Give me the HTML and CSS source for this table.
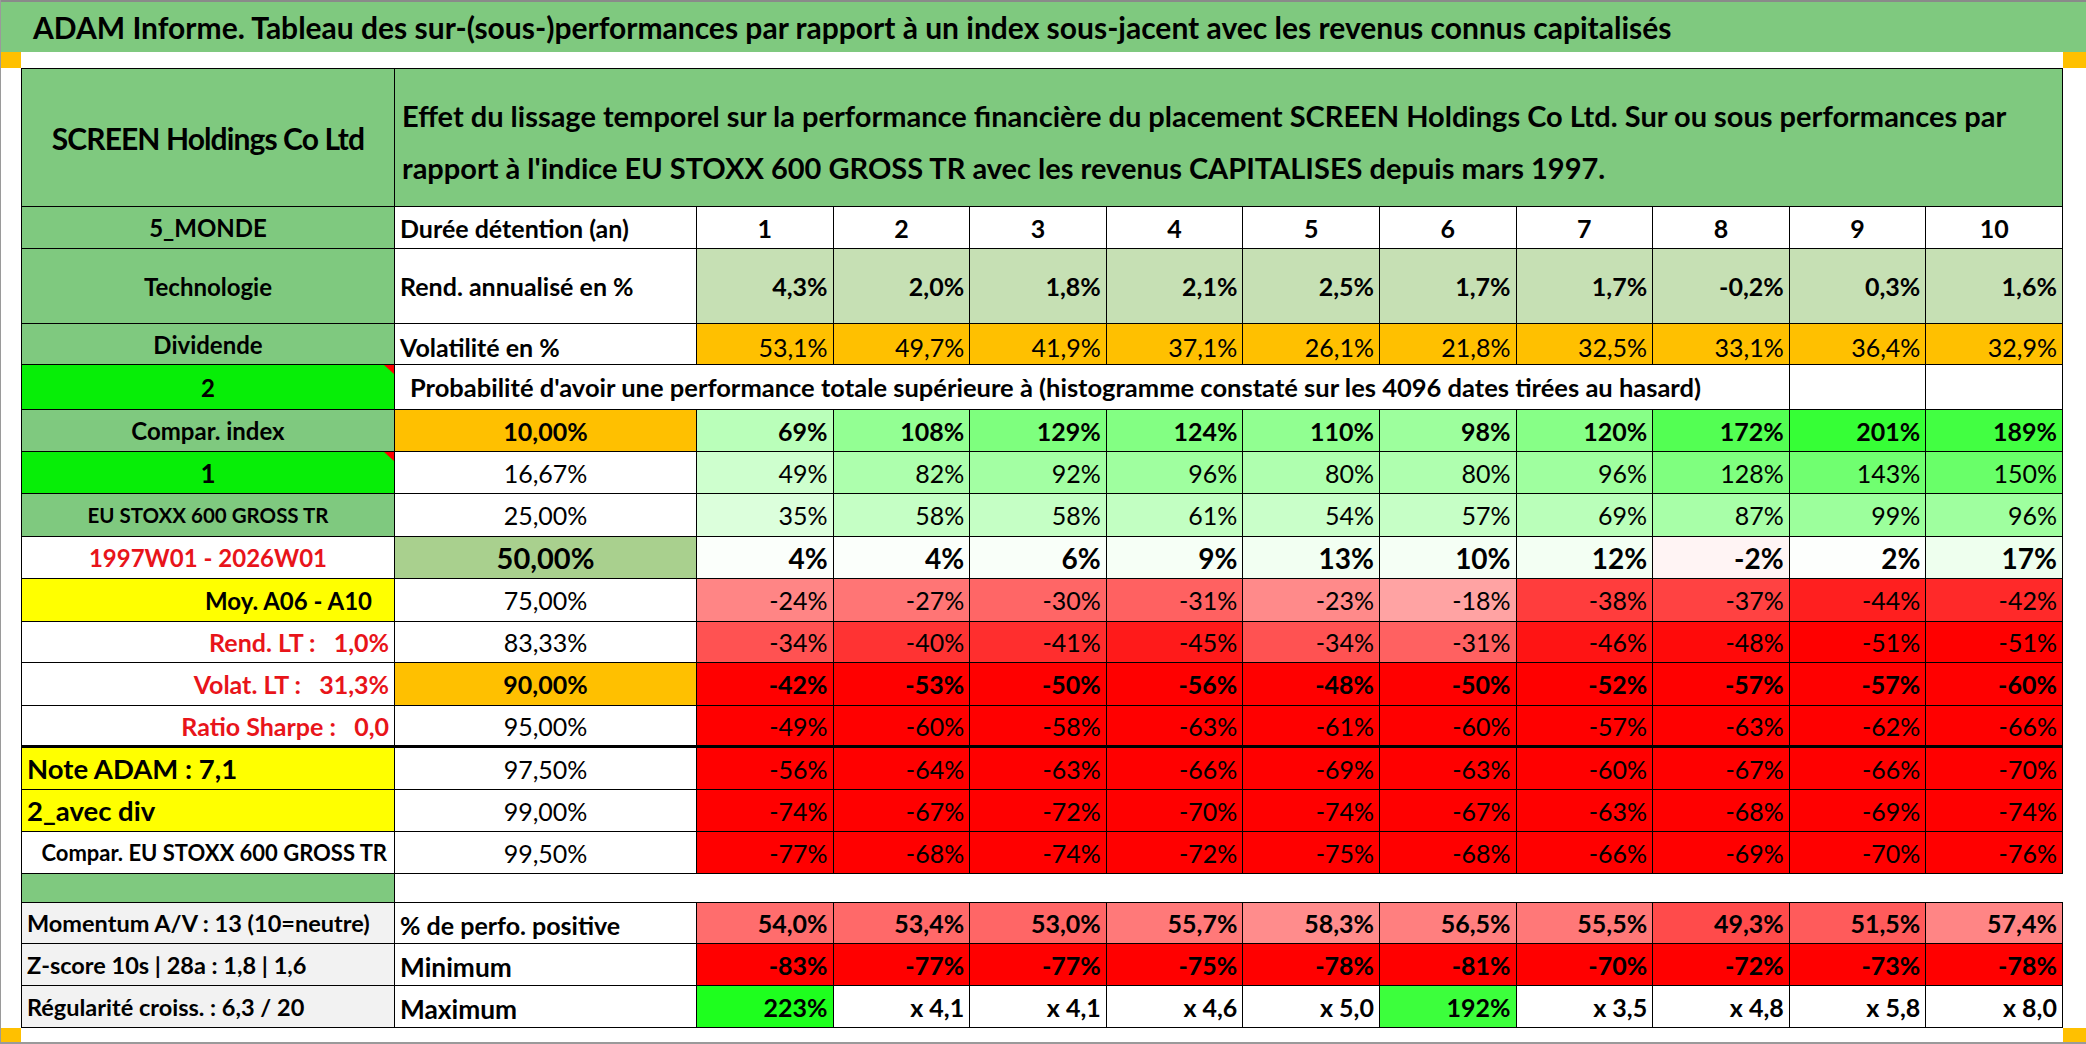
FILE: index.html
```html
<!DOCTYPE html>
<html lang="fr">
<head>
<meta charset="utf-8">
<title>ADAM Informe</title>
<link rel="stylesheet" href="styles.css">
</head>
<body>
<div class="sheet">
  <div class="title">ADAM Informe. Tableau des sur-(sous-)performances par rapport à un index sous-jacent avec les revenus connus capitalisés</div>
  <div class="band"><span class="mark"></span><span class="mark mark-r"></span></div>
  <div class="main">
    <div class="gutter"></div>
    <div class="grid">
      <!-- header -->
      <div class="c g ctr b screen">SCREEN Holdings Co Ltd</div>
      <div class="c g b desc span11">Effet du lissage temporel sur la performance financière du placement SCREEN Holdings Co Ltd. Sur ou sous performances par<br>rapport à l'indice EU STOXX 600 GROSS TR avec les revenus CAPITALISES depuis mars 1997.</div>

      <!-- durée -->
      <div class="c g ctr b lab">5_MONDE</div>
      <div class="c b">Durée détention (an)</div>
      <div class="c ctr b">1</div><div class="c ctr b">2</div><div class="c ctr b">3</div><div class="c ctr b">4</div><div class="c ctr b">5</div><div class="c ctr b">6</div><div class="c ctr b">7</div><div class="c ctr b">8</div><div class="c ctr b">9</div><div class="c ctr b">10</div>

      <!-- rend -->
      <div class="c g ctr b lab">Technologie</div>
      <div class="c b">Rend. annualisé en %</div>
      <div class="c lg rt b">4,3%</div><div class="c lg rt b">2,0%</div><div class="c lg rt b">1,8%</div><div class="c lg rt b">2,1%</div><div class="c lg rt b">2,5%</div><div class="c lg rt b">1,7%</div><div class="c lg rt b">1,7%</div><div class="c lg rt b">-0,2%</div><div class="c lg rt b">0,3%</div><div class="c lg rt b">1,6%</div>

      <!-- vol -->
      <div class="c g ctr b lab">Dividende</div>
      <div class="c b low">Volatilité en %</div>
      <div class="c og rt low">53,1%</div><div class="c og rt low">49,7%</div><div class="c og rt low">41,9%</div><div class="c og rt low">37,1%</div><div class="c og rt low">26,1%</div><div class="c og rt low">21,8%</div><div class="c og rt low">32,5%</div><div class="c og rt low">33,1%</div><div class="c og rt low">36,4%</div><div class="c og rt low">32,9%</div>

      <!-- proba title -->
      <div class="c bg ctr b lab tri">2</div>
      <div class="c b proba span9">Probabilité d'avoir une performance totale supérieure à (histogramme constaté sur les 4096 dates tirées au hasard)</div>
      <div class="c"></div><div class="c"></div>

      <!-- 10% -->
      <div class="c g ctr b lab">Compar. index</div>
      <div class="c og ctr b">10,00%</div>
      <div class="c rt b" style="background:rgb(186,255,186)">69%</div><div class="c rt b" style="background:rgb(147,255,147)">108%</div><div class="c rt b" style="background:rgb(126,255,126)">129%</div><div class="c rt b" style="background:rgb(131,255,131)">124%</div><div class="c rt b" style="background:rgb(145,255,145)">110%</div><div class="c rt b" style="background:rgb(157,255,157)">98%</div><div class="c rt b" style="background:rgb(135,255,135)">120%</div><div class="c rt b" style="background:rgb(83,255,83)">172%</div><div class="c rt b" style="background:rgb(54,255,54)">201%</div><div class="c rt b" style="background:rgb(66,255,66)">189%</div>

      <!-- 16,67% -->
      <div class="c bg ctr b one tri">1</div>
      <div class="c ctr">16,67%</div>
      <div class="c rt" style="background:rgb(206,255,206)">49%</div><div class="c rt" style="background:rgb(173,255,173)">82%</div><div class="c rt" style="background:rgb(163,255,163)">92%</div><div class="c rt" style="background:rgb(159,255,159)">96%</div><div class="c rt" style="background:rgb(175,255,175)">80%</div><div class="c rt" style="background:rgb(175,255,175)">80%</div><div class="c rt" style="background:rgb(159,255,159)">96%</div><div class="c rt" style="background:rgb(127,255,127)">128%</div><div class="c rt" style="background:rgb(112,255,112)">143%</div><div class="c rt" style="background:rgb(105,255,105)">150%</div>

      <!-- 25% -->
      <div class="c g ctr b idx">EU STOXX 600 GROSS TR</div>
      <div class="c ctr">25,00%</div>
      <div class="c rt" style="background:rgb(220,255,220)">35%</div><div class="c rt" style="background:rgb(197,255,197)">58%</div><div class="c rt" style="background:rgb(197,255,197)">58%</div><div class="c rt" style="background:rgb(194,255,194)">61%</div><div class="c rt" style="background:rgb(201,255,201)">54%</div><div class="c rt" style="background:rgb(198,255,198)">57%</div><div class="c rt" style="background:rgb(186,255,186)">69%</div><div class="c rt" style="background:rgb(168,255,168)">87%</div><div class="c rt" style="background:rgb(156,255,156)">99%</div><div class="c rt" style="background:rgb(159,255,159)">96%</div>

      <!-- 50% -->
      <div class="c ctr b red dates">1997W01 - 2026W01</div>
      <div class="c mg ctr b mid">50,00%</div>
      <div class="c rt b big" style="background:rgb(251,255,251)">4%</div><div class="c rt b big" style="background:rgb(251,255,251)">4%</div><div class="c rt b big" style="background:rgb(249,255,249)">6%</div><div class="c rt b big" style="background:rgb(246,255,246)">9%</div><div class="c rt b big" style="background:rgb(242,255,242)">13%</div><div class="c rt b big" style="background:rgb(245,255,245)">10%</div><div class="c rt b big" style="background:rgb(243,255,243)">12%</div><div class="c rt b big" style="background:rgb(255,244,244)">-2%</div><div class="c rt b big" style="background:rgb(253,255,253)">2%</div><div class="c rt b big" style="background:rgb(238,255,238)">17%</div>

      <!-- 75% -->
      <div class="c ye rt b moy">Moy. A06 - A10</div>
      <div class="c ctr">75,00%</div>
      <div class="c rt" style="background:rgb(255,133,133)">-24%</div><div class="c rt" style="background:rgb(255,117,117)">-27%</div><div class="c rt" style="background:rgb(255,102,102)">-30%</div><div class="c rt" style="background:rgb(255,97,97)">-31%</div><div class="c rt" style="background:rgb(255,138,138)">-23%</div><div class="c rt" style="background:rgb(255,163,163)">-18%</div><div class="c rt" style="background:rgb(255,61,61)">-38%</div><div class="c rt" style="background:rgb(255,66,66)">-37%</div><div class="c rt" style="background:rgb(255,31,31)">-44%</div><div class="c rt" style="background:rgb(255,41,41)">-42%</div>

      <!-- 83,33% -->
      <div class="c rt b red">Rend. LT :   1,0%</div>
      <div class="c ctr">83,33%</div>
      <div class="c rt" style="background:rgb(255,82,82)">-34%</div><div class="c rt" style="background:rgb(255,51,51)">-40%</div><div class="c rt" style="background:rgb(255,46,46)">-41%</div><div class="c rt" style="background:rgb(255,26,26)">-45%</div><div class="c rt" style="background:rgb(255,82,82)">-34%</div><div class="c rt" style="background:rgb(255,97,97)">-31%</div><div class="c rt" style="background:rgb(255,20,20)">-46%</div><div class="c rt" style="background:rgb(255,10,10)">-48%</div><div class="c rt" style="background:rgb(255,0,0)">-51%</div><div class="c rt" style="background:rgb(255,0,0)">-51%</div>

      <!-- 90% -->
      <div class="c rt b red">Volat. LT :   31,3%</div>
      <div class="c og ctr b">90,00%</div>
      <div class="c rt b rd">-42%</div><div class="c rt b rd">-53%</div><div class="c rt b rd">-50%</div><div class="c rt b rd">-56%</div><div class="c rt b rd">-48%</div><div class="c rt b rd">-50%</div><div class="c rt b rd">-52%</div><div class="c rt b rd">-57%</div><div class="c rt b rd">-57%</div><div class="c rt b rd">-60%</div>

      <!-- 95% -->
      <div class="c rt b red thick">Ratio Sharpe :   0,0</div>
      <div class="c ctr thick">95,00%</div>
      <div class="c rt rd thick">-49%</div><div class="c rt rd thick">-60%</div><div class="c rt rd thick">-58%</div><div class="c rt rd thick">-63%</div><div class="c rt rd thick">-61%</div><div class="c rt rd thick">-60%</div><div class="c rt rd thick">-57%</div><div class="c rt rd thick">-63%</div><div class="c rt rd thick">-62%</div><div class="c rt rd thick">-66%</div>

      <!-- 97,5% -->
      <div class="c ye b note">Note ADAM : 7,1</div>
      <div class="c ctr">97,50%</div>
      <div class="c rt rd">-56%</div><div class="c rt rd">-64%</div><div class="c rt rd">-63%</div><div class="c rt rd">-66%</div><div class="c rt rd">-69%</div><div class="c rt rd">-63%</div><div class="c rt rd">-60%</div><div class="c rt rd">-67%</div><div class="c rt rd">-66%</div><div class="c rt rd">-70%</div>

      <!-- 99% -->
      <div class="c ye b note">2_avec div</div>
      <div class="c ctr">99,00%</div>
      <div class="c rt rd">-74%</div><div class="c rt rd">-67%</div><div class="c rt rd">-72%</div><div class="c rt rd">-70%</div><div class="c rt rd">-74%</div><div class="c rt rd">-67%</div><div class="c rt rd">-63%</div><div class="c rt rd">-68%</div><div class="c rt rd">-69%</div><div class="c rt rd">-74%</div>

      <!-- 99,5% -->
      <div class="c rt b comp">Compar. EU STOXX 600 GROSS TR</div>
      <div class="c ctr">99,50%</div>
      <div class="c rt rd">-77%</div><div class="c rt rd">-68%</div><div class="c rt rd">-74%</div><div class="c rt rd">-72%</div><div class="c rt rd">-75%</div><div class="c rt rd">-68%</div><div class="c rt rd">-66%</div><div class="c rt rd">-69%</div><div class="c rt rd">-70%</div><div class="c rt rd">-76%</div>

      <!-- blank -->
      <div class="c g"></div>
      <div class="c span11 open"></div>

      <!-- stats -->
      <div class="c gr b stat">Momentum A/V : 13 (10=neutre)</div>
      <div class="c b lbl">% de perfo. positive</div>
      <div class="c rt b" style="background:rgb(255,109,109)">54,0%</div><div class="c rt b" style="background:rgb(255,105,105)">53,4%</div><div class="c rt b" style="background:rgb(255,102,102)">53,0%</div><div class="c rt b" style="background:rgb(255,121,121)">55,7%</div><div class="c rt b" style="background:rgb(255,140,140)">58,3%</div><div class="c rt b" style="background:rgb(255,127,127)">56,5%</div><div class="c rt b" style="background:rgb(255,120,120)">55,5%</div><div class="c rt b" style="background:rgb(255,75,75)">49,3%</div><div class="c rt b" style="background:rgb(255,91,91)">51,5%</div><div class="c rt b" style="background:rgb(255,133,133)">57,4%</div>

      <div class="c gr b stat">Z-score 10s | 28a : 1,8 | 1,6</div>
      <div class="c b lbl mm">Minimum</div>
      <div class="c rt b rd">-83%</div><div class="c rt b rd">-77%</div><div class="c rt b rd">-77%</div><div class="c rt b rd">-75%</div><div class="c rt b rd">-78%</div><div class="c rt b rd">-81%</div><div class="c rt b rd">-70%</div><div class="c rt b rd">-72%</div><div class="c rt b rd">-73%</div><div class="c rt b rd">-78%</div>

      <div class="c gr b stat">Régularité croiss. : 6,3 / 20</div>
      <div class="c b lbl mm">Maximum</div>
      <div class="c rt b" style="background:rgb(30,255,30)">223%</div><div class="c rt b">x 4,1</div><div class="c rt b">x 4,1</div><div class="c rt b">x 4,6</div><div class="c rt b">x 5,0</div><div class="c rt b" style="background:rgb(60,255,60)">192%</div><div class="c rt b">x 3,5</div><div class="c rt b">x 4,8</div><div class="c rt b">x 5,8</div><div class="c rt b">x 8,0</div>
    </div>
  </div>
  <div class="band band-bottom"><span class="mark"></span><span class="mark mark-r"></span></div>
</div>
</body>
</html>
```

FILE: styles.css
```css
html, body {
  margin: 0;
  padding: 0;
  background: #ffffff;
}

body {
  font-family: "Lato", "Liberation Sans", sans-serif;
  color: #000000;
}

.sheet {
  box-sizing: border-box;
  width: 2086px;
  border-left: 1px solid #9a9a9a;
}

.title {
  box-sizing: border-box;
  height: 52px;
  border-top: 2px solid #8a8a8a;
  background: #7fc97f;
  display: flex;
  align-items: center;
  padding-left: 32px;
  font-size: 30px;
  font-weight: 700;
  white-space: nowrap;
  overflow: hidden;
}

.band {
  height: 16px;
  display: flex;
  justify-content: space-between;
}

.band-bottom {
  box-sizing: border-box;
  height: 16px;
  border-bottom: 2px solid #9a9a9a;
}

.mark {
  width: 20px;
  background: #ffc000;
}

.mark-r {
  width: 23px;
}

.main {
  display: flex;
}

.gutter {
  width: 20px;
  flex: none;
}

.grid {
  display: grid;
  grid-template-columns: 373px 302px repeat(10, 136.6px);
  grid-template-rows: 138px 42px 75px 41px 45px 42px 42px 43px 42px 43px 41px 43px 42px 42px 42px 42px 29px 41px 42px 42px;
  border-top: 1px solid #000;
  border-left: 1px solid #000;
}

.c {
  box-sizing: border-box;
  position: relative;
  min-width: 0;
  overflow: hidden;
  display: flex;
  align-items: center;
  padding: 0 5px;
  border-right: 1px solid #000;
  border-bottom: 1px solid #000;
  background: #ffffff;
  font-size: 25px;
  white-space: pre;
}

.span11 { grid-column: span 11; }
.span9 { grid-column: span 9; }

.ctr { justify-content: center; }
.rt { justify-content: flex-end; }
.b { font-weight: 700; }
.red { color: #e8141a; }

.g { background: #7fc97f; }
.lg { background: #c6e0b4; }
.og { background: #ffc000; }
.ye { background: #ffff00; }
.gr { background: #f2f2f2; }
.bg { background: #07ee07; }
.mg { background: #a9d08e; }
.rd { background: #ff0000; }

.screen {
  font-size: 30px;
  letter-spacing: -0.9px;
}

.desc {
  display: block;
  padding: 21px 0 0 7px;
  font-size: 29px;
  line-height: 52px;
}

.lab { font-size: 24px; }
.one { font-size: 26px; }

.proba {
  padding-left: 15px;
  font-size: 25.5px;
}

.low { padding-top: 5px; }

.mid { font-size: 29px; }
.big { font-size: 28px; }
.idx { font-size: 20.5px; }
.dates { font-size: 24px; }
.moy {
  font-size: 24px;
  padding-right: 22px;
}
.note {
  padding-left: 5px;
  font-size: 27.5px;
}
.comp {
  font-size: 22px;
  padding-right: 7px;
}
.stat {
  font-size: 23.5px;
  padding-left: 5px;
}
.lbl { padding-top: 4px; }
.mm { font-size: 26.3px; }

.thick { border-bottom: 3px solid #000; }

.open { border-right: none; }

.tri::after {
  content: "";
  position: absolute;
  top: 0;
  right: 0;
  border-top: 9px solid #ff0000;
  border-left: 10px solid transparent;
}
```
